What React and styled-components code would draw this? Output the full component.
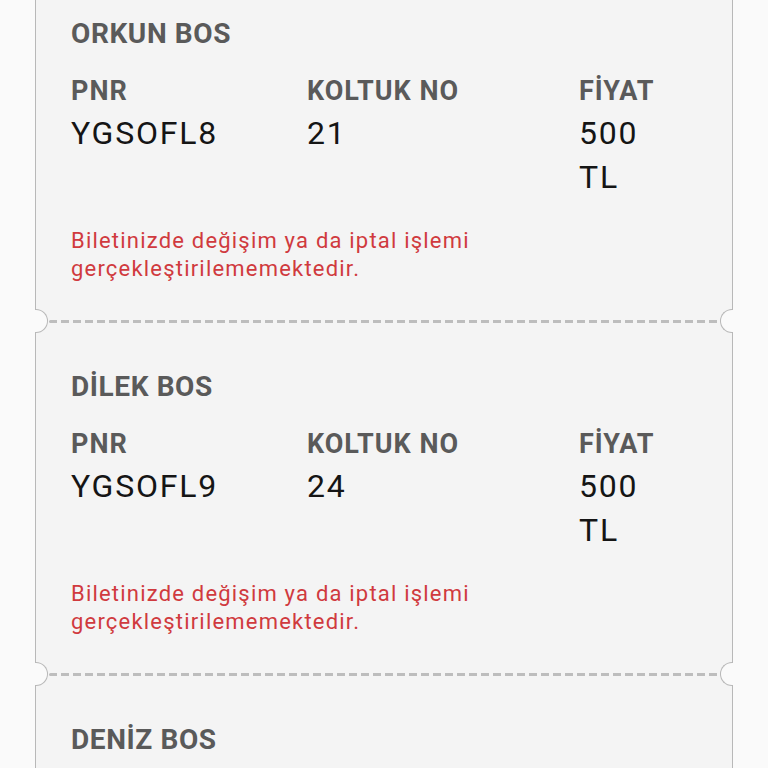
import styled, { createGlobalStyle } from "styled-components";

const GlobalStyle = createGlobalStyle`
  html, body {
    margin: 0;
    padding: 0;
    background: #fafafa;
    font-family: Roboto, "Noto Sans", Arial, sans-serif;
  }
`;

const tickets = [
  { name: "ORKUN BOS", pnr: "YGSOFL8", seat: "21", price: "500 TL" },
  { name: "DİLEK BOS", pnr: "YGSOFL9", seat: "24", price: "500 TL" },
  { name: "DENİZ BOS", pnr: "YGSOFM0", seat: "25", price: "500 TL" },
];

function App() {
  return (
    <>
      <GlobalStyle />
      <Page>
        <Card>
          {tickets.map((t, i) => (
            <div key={t.pnr}>
              {i > 0 && (
                <Divider>
                  <Notch side="left" />
                  <Dashes />
                  <Notch side="right" />
                </Divider>
              )}
              <Ticket>
                <Passenger>{t.name}</Passenger>
                <Fields>
                  <Field>
                    <Label>PNR</Label>
                    <Value>{t.pnr}</Value>
                  </Field>
                  <Field>
                    <Label>KOLTUK NO</Label>
                    <Value>{t.seat}</Value>
                  </Field>
                  <Field>
                    <Label>FİYAT</Label>
                    <Value>{t.price}</Value>
                  </Field>
                </Fields>
                <Warning>
                  Biletinizde değişim ya da iptal işlemi
                  <br />
                  gerçekleştirilememektedir.
                </Warning>
              </Ticket>
            </div>
          ))}
        </Card>
      </Page>
    </>
  );
}

const Page = styled.div`
  height: 768px;
  overflow: hidden;
`;

const Card = styled.div`
  margin: -20px 0 0 35px;
  width: 696px;
  background: #f4f4f4;
  border-left: 1px solid #b8b8b8;
  border-right: 1px solid #b8b8b8;
`;

const Ticket = styled.section`
  padding: 37px 36px 26px 35px;
`;

const Passenger = styled.h2`
  margin: 0;
  font-size: 28px;
  line-height: 34px;
  font-weight: 700;
  letter-spacing: 0.6px;
  color: #5a5a5a;
`;

const Fields = styled.div`
  display: grid;
  grid-template-columns: 236px 272px 80px;
  margin-top: 20px;
`;

const Field = styled.div`
  display: flex;
  flex-direction: column;
`;

const Label = styled.span`
  font-size: 27px;
  line-height: 40px;
  font-weight: 700;
  letter-spacing: 1px;
  color: #5a5a5a;
`;

const Value = styled.span`
  font-size: 32px;
  line-height: 44px;
  letter-spacing: 1.8px;
  color: #151515;
`;

const Warning = styled.p`
  margin: 28px 0 0;
  font-size: 22px;
  line-height: 28px;
  letter-spacing: 1.2px;
  color: #d03a3e;
`;

const Divider = styled.div`
  position: relative;
  height: 24px;
  display: flex;
  align-items: center;
  padding: 0 13px;
`;

const Dashes = styled.div`
  flex: 1;
  height: 3px;
  border-radius: 2px;
  background: repeating-linear-gradient(
    to right,
    #bdbdbd 0 8px,
    transparent 8px 12px
  );
`;

const Notch = styled.span`
  position: absolute;
  top: 0;
  width: 12px;
  height: 22px;
  background: #fafafa;
  border: 1px solid #b8b8b8;
  ${({ side }) =>
    side === "left"
      ? `left: -1px; border-left: none; border-radius: 0 12px 12px 0;`
      : `right: -1px; border-right: none; border-radius: 12px 0 0 12px;`}
`;

export default App;
